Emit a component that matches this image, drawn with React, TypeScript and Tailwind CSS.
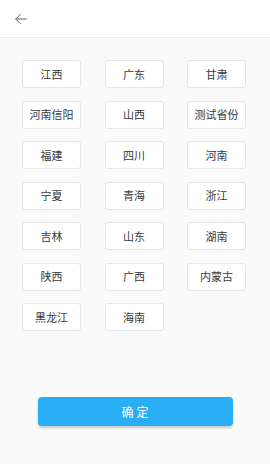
const provinces = [
  '江西', '广东', '甘肃',
  '河南信阳', '山西', '测试省份',
  '福建', '四川', '河南',
  '宁夏', '青海', '浙江',
  '吉林', '山东', '湖南',
  '陕西', '广西', '内蒙古',
  '黑龙江', '海南',
];

export default function App() {
  return (
    <div
      className="w-[270px] h-[464px] bg-[#fafafa] flex flex-col"
      style={{ fontFamily: '"Noto Sans CJK SC", "Noto Sans", sans-serif' }}
    >
      <div className="h-[38px] shrink-0 bg-white border-b border-[#ececec] flex items-center pl-[14px]">
        <svg width="14" height="14" viewBox="0 0 24 24" fill="none" stroke="#555" strokeWidth="1.6" strokeLinecap="round" strokeLinejoin="round">
          <path d="M21 12H3" />
          <path d="M11 4l-8 8 8 8" />
        </svg>
      </div>
      <div className="grid grid-cols-[59px_59px_59px] gap-x-[23.5px] gap-y-[12.5px] pl-[22px] pt-[22px]">
        {provinces.map((p) => (
          <div
            key={p}
            className="h-[28px] bg-white border border-[#e6e6e6] rounded-[3px] flex items-center justify-center text-[11px] text-[#3a3a3a]"
          >
            {p}
          </div>
        ))}
      </div>
      <div className="flex justify-center mt-[66px]">
        <button className="w-[195px] h-[29px] bg-[#29aef6] rounded-[4px] shadow-[0_2px_3px_rgba(0,0,0,0.2)] text-white text-[12px] tracking-[3px] pl-[3px]">
          确定
        </button>
      </div>
    </div>
  );
}
